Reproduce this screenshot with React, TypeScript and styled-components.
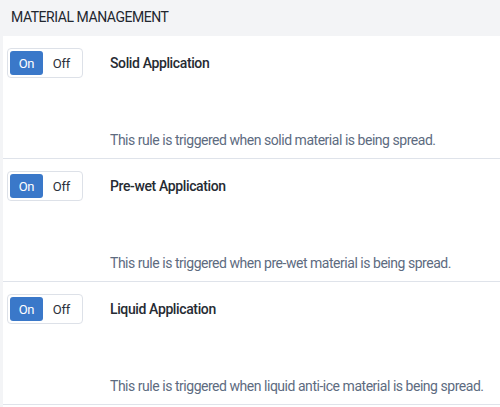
import React, { useState } from "react";
import styled, { createGlobalStyle } from "styled-components";

const Global = createGlobalStyle`
  html, body { margin: 0; padding: 0; background: #ffffff; }
  body { font-family: Roboto, "Liberation Sans", Arial, sans-serif; -webkit-font-smoothing: antialiased; }
  * { box-sizing: border-box; }
`;

const Page = styled.div`
  width: 500px;
  height: 407px;
  overflow: hidden;
  background: #f3f4f6;
  display: flex;
  flex-direction: column;
`;

const Header = styled.div`
  height: 36px;
  flex: none;
  display: flex;
  align-items: center;
  padding-left: 11px;
  padding-bottom: 3px;
  font-size: 14px;
  color: #22272f;
  letter-spacing: -0.45px;
  text-transform: uppercase;
  background: #f3f4f6;
`;

const List = styled.div`
  margin-left: 3px;
  background: #ffffff;
  flex: 1;
`;

const Row = styled.div`
  height: 123px;
  display: grid;
  grid-template-columns: 103px 1fr;
  border-bottom: 1px solid #dfe3ea;
  padding: 12px 0 0 4px;
`;

const Toggle = styled.div`
  width: 76px;
  height: 30px;
  border: 1px solid #dde1e8;
  border-radius: 4px;
  padding: 2px;
  display: flex;
`;

const Seg = styled.button<{ $active: boolean }>`
  border: none;
  padding: 0;
  margin: 0;
  width: 33px;
  height: 24px;
  border-radius: 3px;
  font-family: inherit;
  font-size: 13px;
  letter-spacing: -0.2px;
  cursor: pointer;
  background: ${(p) => (p.$active ? "#3a78c9" : "transparent")};
  color: ${(p) => (p.$active ? "#ffffff" : "#2b303a")};
  flex: ${(p) => (p.$active ? "none" : "1")};
`;

const Body = styled.div`
  display: flex;
  flex-direction: column;
`;

const Title = styled.div`
  font-size: 14px;
  font-weight: 500;
  color: #262b33;
  line-height: 16px;
  letter-spacing: -0.38px;
  margin-top: 7px;
`;

const Desc = styled.div`
  font-size: 14px;
  color: #5d6b7f;
  line-height: 16px;
  letter-spacing: -0.47px;
  margin-top: 61px;
`;

const rules = [
  { title: "Solid Application", desc: "This rule is triggered when solid material is being spread." },
  { title: "Pre-wet Application", desc: "This rule is triggered when pre-wet material is being spread." },
  { title: "Liquid Application", desc: "This rule is triggered when liquid anti-ice material is being spread." },
];

function RuleRow({ title, desc }: { title: string; desc: string }) {
  const [on, setOn] = useState(true);
  return (
    <Row>
      <div>
        <Toggle>
          <Seg $active={on} onClick={() => setOn(true)}>On</Seg>
          <Seg $active={!on} onClick={() => setOn(false)}>Off</Seg>
        </Toggle>
      </div>
      <Body>
        <Title>{title}</Title>
        <Desc>{desc}</Desc>
      </Body>
    </Row>
  );
}

export default function App() {
  return (
    <>
      <Global />
      <Page>
        <Header>Material Management</Header>
        <List>
          {rules.map((r) => (
            <RuleRow key={r.title} {...r} />
          ))}
        </List>
      </Page>
    </>
  );
}
